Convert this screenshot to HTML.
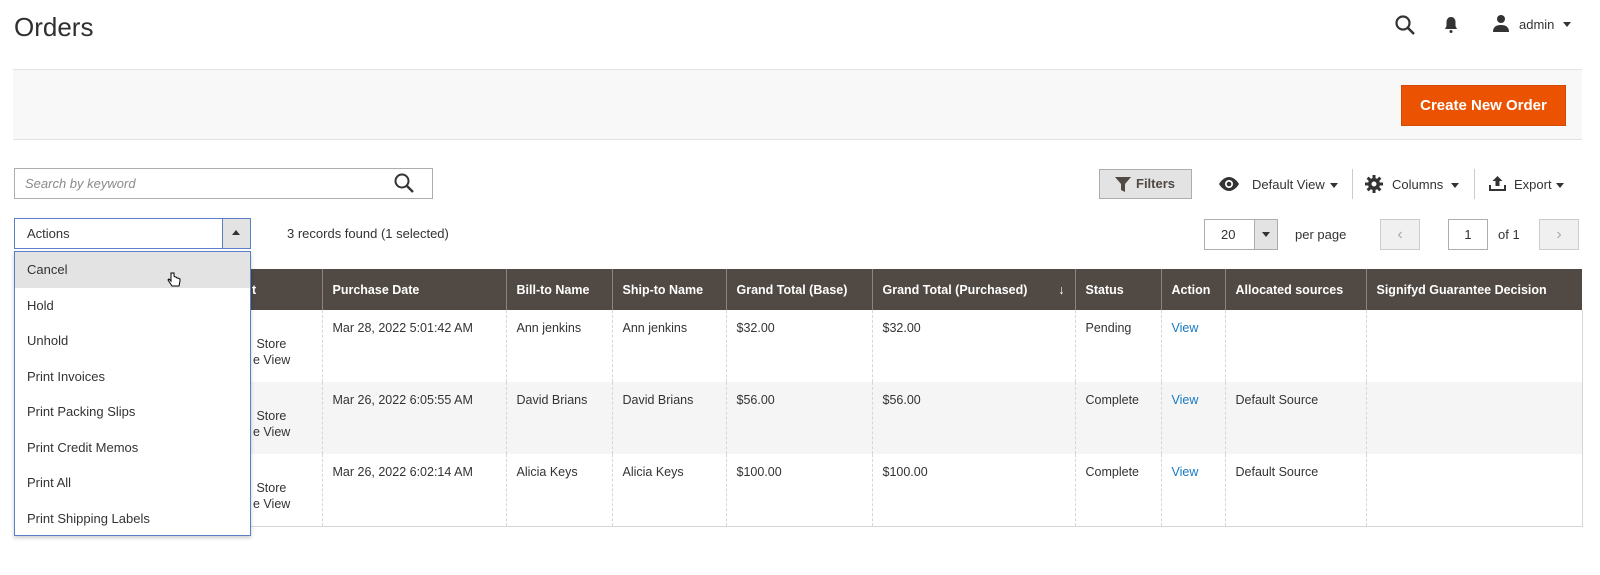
<!DOCTYPE html>
<html><head><meta charset="utf-8"><style>
*{box-sizing:border-box;margin:0;padding:0}
body{width:1600px;height:575px;background:#fff;font-family:"Liberation Sans",Arial,sans-serif;color:#333;font-size:13px;position:relative;overflow:hidden}
.a{position:absolute}
.band{left:13px;top:69px;width:1569px;height:71px;background:#f8f8f8;border-top:1px solid #e3e3e3;border-bottom:1px solid #e3e3e3}
.btn{left:1401px;top:85px;width:165px;height:41px;background:#eb5202;border:1px solid #d44a00;color:#fff;font-weight:bold;font-size:15px;text-align:center;line-height:39px}
.search{left:14px;top:168px;width:419px;height:31px;border:1px solid #adadad;font-style:italic;color:#8a8a8a;padding-left:10px;line-height:29px}
.filters{left:1099px;top:169px;width:93px;height:30px;background:#e3e3e3;border:1px solid #adadad;font-weight:bold;color:#514943;line-height:28px;padding-left:36px}
.act{left:14px;top:218px;width:237px;height:31px;border:1px solid #5a7ec8;line-height:29px;padding-left:12px}
.actarr{left:222px;top:218px;width:29px;height:31px;border:1px solid #5a7ec8;background:#e3e3e3}
.dd{left:14px;top:251px;width:237px;height:285px;border:1px solid #5a7ec8;background:#fff;box-shadow:0 2px 4px rgba(0,0,0,.2);z-index:5}
.dd div{height:35.5px;line-height:35.5px;padding-left:12px;color:#333}
table{position:absolute;left:251px;top:269px;border-collapse:collapse;table-layout:fixed;width:1331px}
th{background:#514943;color:#fff;font-weight:bold;text-align:left;height:41px;padding:0 10px;border-left:1px solid #8a837f;font-size:12.5px}
td{height:72px;vertical-align:top;padding:11px 10px;border-left:1px dashed #d6d6d6;font-size:12.5px}
tr.g td{background:#f5f5f5}
tbody tr:last-child td{border-bottom:1px solid #d6d6d6}
.v{color:#1979c3}
.pg{border:1px solid #adadad;height:31px;top:219px;line-height:29px;text-align:center}
.st{border-left:0 !important;padding:26px 0 0 2px !important;line-height:16px;white-space:nowrap}
</style></head><body>
<div class="a" style="left:14px;top:12px;font-size:26px;color:#303030">Orders</div>
<svg class="a" style="left:1394px;top:14px" width="22" height="22" viewBox="0 0 22 22"><circle cx="9" cy="9" r="6.5" fill="none" stroke="#333" stroke-width="2.2"/><path d="M14 14l6 6" stroke="#333" stroke-width="2.5"/></svg>
<svg class="a" style="left:1443px;top:16px" width="16" height="18" viewBox="0 0 16 18"><path d="M8 1c-3 0-4.5 2.5-4.5 5v4L2 13h12l-1.5-3V6C12.5 3.5 11 1 8 1z" fill="#333"/><circle cx="8" cy="15.5" r="1.5" fill="#333"/></svg>
<svg class="a" style="left:1492px;top:14px" width="18" height="18" viewBox="0 0 18 18"><circle cx="9" cy="5" r="4" fill="#333"/><path d="M1 18c0-5 3-7 8-7s8 2 8 7z" fill="#333"/></svg>
<div class="a" style="left:1519px;top:17px;font-size:13px;color:#333">admin</div>
<div class="a" style="left:1563px;top:22px;border:4px solid transparent;border-top:5px solid #333"></div>
<div class="a band"></div>
<div class="a btn">Create New Order</div>
<div class="a search">Search by keyword</div>
<svg class="a" style="left:393px;top:172px" width="22" height="22" viewBox="0 0 22 22"><circle cx="9" cy="9" r="6.5" fill="none" stroke="#333" stroke-width="2"/><path d="M14 14l6 6" stroke="#333" stroke-width="2.3"/></svg>
<div class="a filters">Filters</div>
<svg class="a" style="left:1115px;top:177px" width="16" height="15" viewBox="0 0 16 15"><path d="M0 0h16L10 7v8l-4-2V7z" fill="#514943"/></svg>
<svg class="a" style="left:1218px;top:177px" width="22" height="14" viewBox="0 0 22 14"><path d="M1 7C4 2 8 0 11 0s7 2 10 7c-3 5-7 7-10 7S4 12 1 7z" fill="#333"/><circle cx="11" cy="7" r="4" fill="#fff"/><circle cx="11" cy="7" r="2.3" fill="#333"/></svg>
<div class="a" style="left:1252px;top:177px">Default View</div>
<div class="a" style="left:1330px;top:183px;border:4px solid transparent;border-top:5px solid #333"></div>
<div class="a" style="left:1352px;top:169px;width:1px;height:30px;background:#ccc"></div>
<svg class="a" style="left:1365px;top:175px" width="18" height="18" viewBox="0 0 18 18"><g fill="#333"><circle cx="9" cy="9" r="6"/><rect x="7.5" y="0" width="3" height="18"/><rect x="0" y="7.5" width="18" height="3"/><rect x="7.5" y="0" width="3" height="18" transform="rotate(45 9 9)"/><rect x="7.5" y="0" width="3" height="18" transform="rotate(-45 9 9)"/></g><circle cx="9" cy="9" r="2.5" fill="#fff"/></svg>
<div class="a" style="left:1392px;top:177px">Columns</div>
<div class="a" style="left:1451px;top:183px;border:4px solid transparent;border-top:5px solid #333"></div>
<div class="a" style="left:1474px;top:169px;width:1px;height:30px;background:#ccc"></div>
<svg class="a" style="left:1489px;top:176px" width="17" height="15" viewBox="0 0 17 15"><path d="M8.5 0l5 5h-3v5h-4V5h-3z M0 9h2v4h13V9h2v6H0z" fill="#333"/></svg>
<div class="a" style="left:1514px;top:177px">Export</div>
<div class="a" style="left:1556px;top:183px;border:4px solid transparent;border-top:5px solid #333"></div>
<div class="a act">Actions</div>
<div class="a actarr"><div class="a" style="left:9px;top:11px;border:4px solid transparent;border-bottom:5px solid #333;border-top:0"></div></div>
<div class="a" style="left:287px;top:226px">3 records found (1 selected)</div>
<div class="a pg" style="left:1204px;width:74px;text-align:left;padding-left:16px;background:#fff">20</div>
<div class="a pg" style="left:1254px;width:24px;background:#e3e3e3"><div class="a" style="left:7px;top:12px;border:4px solid transparent;border-top:5px solid #333"></div></div>
<div class="a" style="left:1295px;top:227px">per page</div>
<div class="a pg" style="left:1380px;width:40px;background:#f0f0f0;border-color:#ccc;color:#aaa;font-size:16px">&#8249;</div>
<div class="a pg" style="left:1448px;width:40px;background:#fff">1</div>
<div class="a" style="left:1498px;top:227px">of 1</div>
<div class="a pg" style="left:1539px;width:40px;background:#f0f0f0;border-color:#ccc;color:#aaa;font-size:16px">&#8250;</div>
<table>
<colgroup><col style="width:71px"><col style="width:184px"><col style="width:106px"><col style="width:114px"><col style="width:146px"><col style="width:203px"><col style="width:86px"><col style="width:64px"><col style="width:141px"><col style="width:216px"></colgroup>
<thead><tr><th style="border-left:0;padding-left:1px">t</th><th>Purchase Date</th><th>Bill-to Name</th><th>Ship-to Name</th><th>Grand Total (Base)</th><th>Grand Total (Purchased)<span style="float:right;font-weight:normal">↓</span></th><th>Status</th><th>Action</th><th>Allocated sources</th><th>Signifyd Guarantee Decision</th></tr></thead>
<tbody>
<tr><td class="st">&nbsp;Store<br>e View</td><td>Mar 28, 2022 5:01:42 AM</td><td>Ann jenkins</td><td>Ann jenkins</td><td>$32.00</td><td>$32.00</td><td>Pending</td><td class="v">View</td><td></td><td style="border-right:1px solid #d6d6d6"></td></tr>
<tr class="g"><td class="st">&nbsp;Store<br>e View</td><td>Mar 26, 2022 6:05:55 AM</td><td>David Brians</td><td>David Brians</td><td>$56.00</td><td>$56.00</td><td>Complete</td><td class="v">View</td><td>Default Source</td><td style="border-right:1px solid #d6d6d6"></td></tr>
<tr><td class="st">&nbsp;Store<br>e View</td><td>Mar 26, 2022 6:02:14 AM</td><td>Alicia Keys</td><td>Alicia Keys</td><td>$100.00</td><td>$100.00</td><td>Complete</td><td class="v">View</td><td>Default Source</td><td style="border-right:1px solid #d6d6d6"></td></tr>
</tbody></table>
<div class="a dd">
<div style="background:#e3e3e3">Cancel</div><div>Hold</div><div>Unhold</div><div>Print Invoices</div><div>Print Packing Slips</div><div>Print Credit Memos</div><div>Print All</div><div>Print Shipping Labels</div>
</div>
<svg class="a" style="left:167px;top:272px;z-index:6" width="14" height="16" viewBox="0 0 14 16"><path d="M4 1v8l-2-2-1 1 4 6h7l1-5V7l-2-1-1 0-1-1-1 0-1-1V1z" fill="#fff" stroke="#000" stroke-width="1"/></svg>
</body></html>
